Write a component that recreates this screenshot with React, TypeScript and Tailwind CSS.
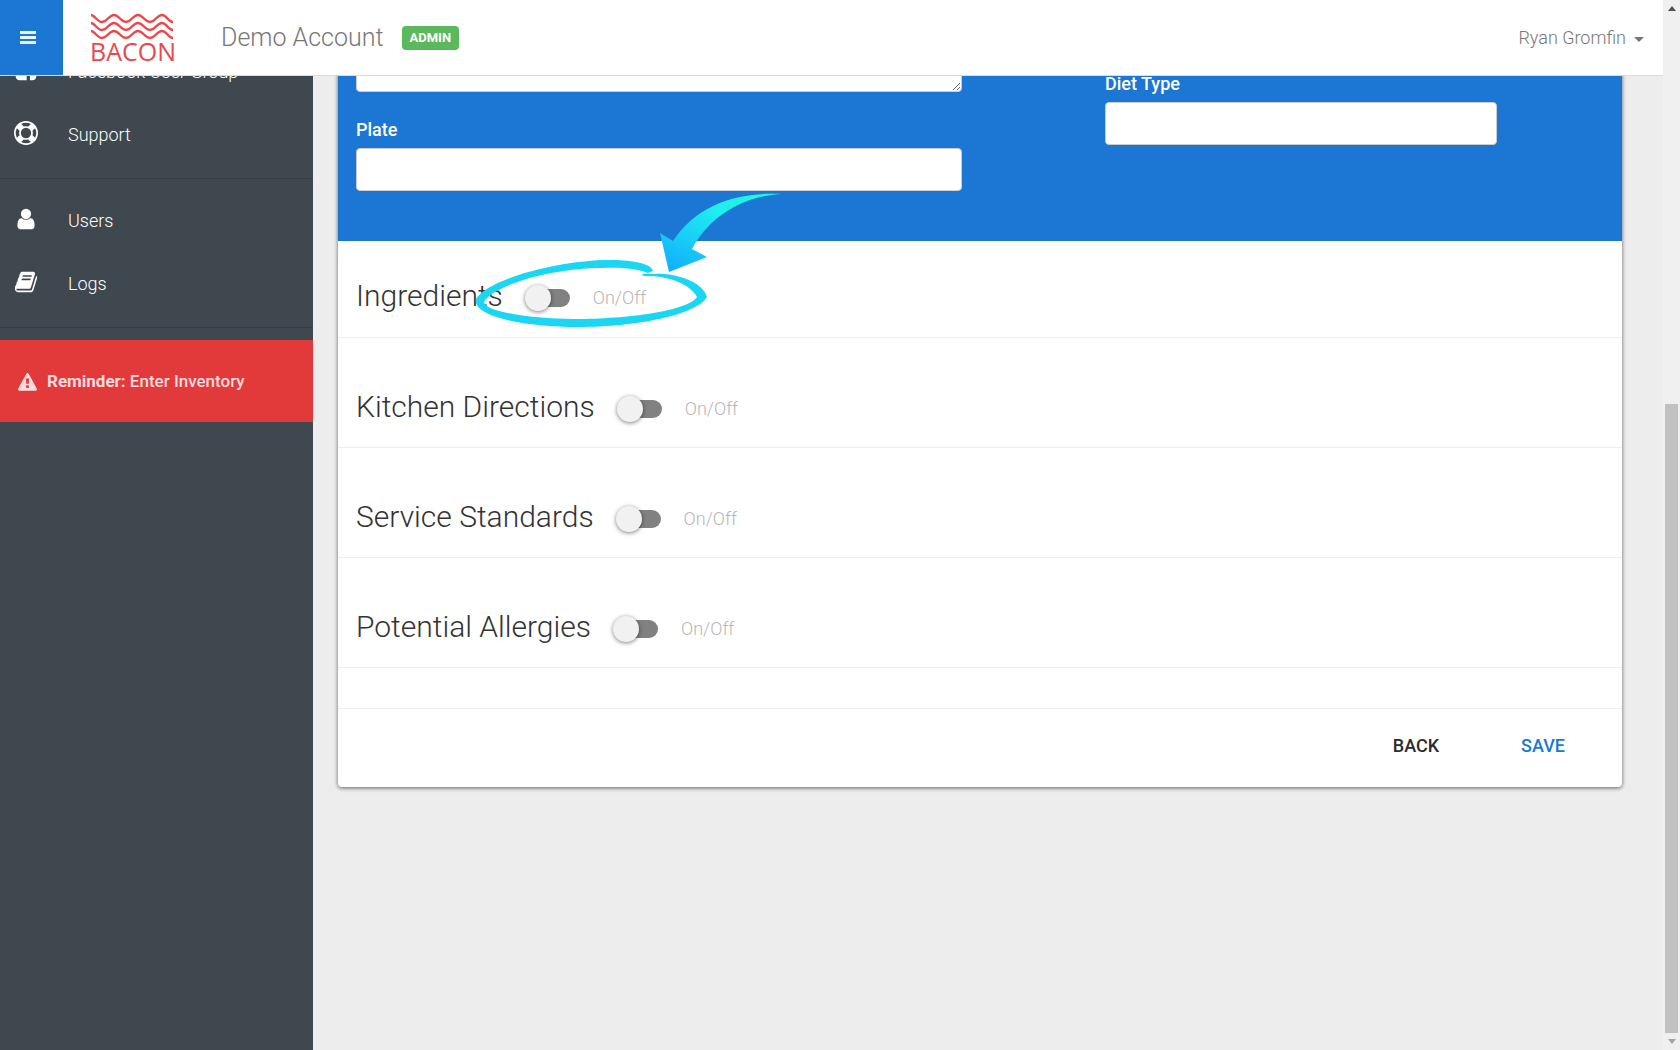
import type { ReactNode } from 'react'

function Icon({ d, className }: { d: string; className: string }) {
  return (
    <svg viewBox="0 0 1792 1792" fill="currentColor" aria-hidden="true" className={className}>
      <path d={d} />
    </svg>
  )
}

const icons = {
  facebook: 'M1376 128q119 0 203.5 84.5t84.5 203.5v960q0 119-84.5 203.5t-203.5 84.5h-188v-595h199l30-232h-229v-148q0-56 23.5-84t91.5-28l122-1v-207q-63-9-178-9-136 0-217.5 80t-81.5 226v171h-200v232h200v595h-532q-119 0-203.5-84.5t-84.5-203.5v-960q0-119 84.5-203.5t203.5-84.5h960z',
  support: 'M896 0q182 0 348 71t286 191 191 286 71 348-71 348-191 286-286 191-348 71-348-71-286-191-191-286-71-348 71-348 191-286 286-191 348-71zm0 128q-190 0-361 90l194 194q82-28 167-28t167 28l194-194q-171-90-361-90zm-678 1129l194-194q-28-82-28-167t28-167l-194-194q-90 171-90 361t90 361zm678 407q190 0 361-90l-194-194q-82 28-167 28t-167-28l-194 194q171 90 361 90zm0-384q159 0 271.5-112.5t112.5-271.5-112.5-271.5-271.5-112.5-271.5 112.5-112.5 271.5 112.5 271.5 271.5 112.5zm484-217l194 194q90-171 90-361t-90-361l-194 194q28 82 28 167t-28 167z',
  user: 'M1536 1399q0 109-62.5 187t-150.5 78h-854q-88 0-150.5-78t-62.5-187q0-85 8.5-160.5t31.5-152 58.5-131 94-89 134.5-34.5q131 128 313 128t313-128q76 0 134.5 34.5t94 89 58.5 131 31.5 152 8.5 160.5zm-256-887q0 159-112.5 271.5t-271.5 112.5-271.5-112.5-112.5-271.5 112.5-271.5 271.5-112.5 271.5 112.5 112.5 271.5z',
  book: 'M1703 478q40 57 18 129l-275 906q-19 64-76.5 107.5t-122.5 43.5h-923q-77 0-148.5-53.5t-99.5-131.5q-24-67-2-127 0-4 3-27t4-37q1-8-3-21.5t-3-19.5q2-11 8-21t16.5-23.5 16.5-23.5q23-38 45-91.5t30-91.5q3-10 .5-30t-.5-28q3-11 17-28t17-23q21-36 42-92t25-90q1-9-2.5-32t.5-28q4-13 22-30.5t22-22.5q19-26 42.5-84.5t27.5-96.5q1-8-3-25.5t-2-26.5q2-8 9-18t18-23 17-21q8-12 16.5-30.5t15-35 16-36 19.5-32 26.5-23.5 36-11.5 47.5 5.5l-1 3q38-9 51-9h761q74 0 114 56t18 130l-274 906q-36 119-71.5 153.5t-128.5 34.5h-869q-27 0-38 15-11 16-1 43 24 70 144 70h923q29 0 56-15.5t35-41.5l300-987q7-22 5-57 38 15 59 43zm-1064 2q-4 13 2 22.5t20 9.5h608q13 0 25.5-9.5t16.5-22.5l21-64q4-13-2-22.5t-20-9.5h-608q-13 0-25.5 9.5t-16.5 22.5zm-83 256q-4 13 2 22.5t20 9.5h608q13 0 25.5-9.5t16.5-22.5l21-64q4-13-2-22.5t-20-9.5h-608q-13 0-25.5 9.5t-16.5 22.5z',
  warning: 'M1024 1375v-190q0-14-9.5-23.5t-22.5-9.5h-192q-13 0-22.5 9.5t-9.5 23.5v190q0 14 9.5 23.5t22.5 9.5h192q13 0 22.5-9.5t9.5-23.5zm-2-374l18-459q0-12-10-19-13-11-24-11h-220q-11 0-24 11-10 7-10 21l17 457q0 10 10 16.5t24 6.5h185q14 0 23.5-6.5t10.5-16.5zm-14-934l768 1408q35 63-2 126-17 29-46.5 46t-63.5 17h-1536q-34 0-63.5-17t-46.5-46q-37-63-2-126l768-1408q17-31 47-49t65-18 65 18 47 49z',
}

function Logo() {
  const wave = 'c4 0 6 7 11 7s7 -7 12 -7s7 7 12 7s7 -7 12 -7s7 7 12 7s7 -7 12 -7s6 7 11 7'
  return (
    <a href="#" className="flex flex-col w-[84px] ml-[27px] pb-[3px] text-[#e9494b]">
      <svg viewBox="0 0 84 29" fill="none" stroke="currentColor" strokeWidth="2.3" className="w-[84px] h-[29px]" aria-hidden="true">
        <path d={'M1 3' + wave} />
        <path d={'M1 11' + wave} />
        <path d={'M1 19' + wave} />
      </svg>
      <span className="font-['Open_Sans'] text-[25px] leading-5">BACON</span>
    </a>
  )
}

function NavItem({ icon, children }: { icon: string; children: ReactNode }) {
  return (
    <li>
      <a href="#" className="flex items-center h-[63px] pl-[14px] text-lg font-light text-white">
        <Icon d={icon} className="size-6 mr-[30px] mb-1" />
        {children}
      </a>
    </li>
  )
}

function Sidebar() {
  return (
    <nav className="w-[313px] shrink-0 bg-[#3f474f] -mt-9">
      <ul>
        <NavItem icon={icons.facebook}>Facebook User Group</NavItem>
        <NavItem icon={icons.support}>Support</NavItem>
      </ul>
      <ul className="mt-3 pt-[10px] pb-3 border-y border-[#373e45]">
        <NavItem icon={icons.user}>Users</NavItem>
        <NavItem icon={icons.book}>Logs</NavItem>
      </ul>
      <a href="#" className="flex items-center h-[82px] mt-3 pt-[2px] pl-[18px] bg-[#e23a3b] text-[17px] font-medium text-[#fbdcdc]">
        <Icon d={icons.warning} className="size-[19px] mr-[10px]" />
        <span><b>Reminder:</b> Enter Inventory</span>
      </a>
    </nav>
  )
}

function ToggleSection({ title, first, children }: { title: string; first?: boolean; children?: ReactNode }) {
  return (
    <section className={first ? 'relative pt-[34px] pb-5 px-[18px] border-b border-[#eeeeee]' : 'pt-12 pb-[19px] px-[18px] border-b border-[#eeeeee]'}>
      <label className="flex items-center w-fit">
        <h2 className="text-[30px] leading-[42px] font-light text-[#333333]">{title}</h2>
        <input
          type="checkbox"
          className="appearance-none relative w-11 h-[18px] mt-1 ml-[23px] rounded-full bg-[#818181] before:absolute before:-left-px before:-top-1 before:size-[26px] before:rounded-full before:bg-[#f1f1f1] before:shadow-[0_1px_4px_rgba(0,0,0,0.5)]"
        />
        <span className="mt-1 ml-[23px] text-lg font-light text-[#b5b5b5]">On/Off</span>
      </label>
      {children}
    </section>
  )
}

function Callout() {
  return (
    <svg viewBox="0 0 320 140" className="absolute left-[132px] -top-[51px] w-80 h-[140px] pointer-events-none" aria-hidden="true">
      <defs>
        <linearGradient id="arrow" x1="0.8" y1="0" x2="0.1" y2="1">
          <stop offset="0" stopColor="#22f5e0" />
          <stop offset="0.3" stopColor="#1eeef0" />
          <stop offset="1" stopColor="#12aefd" />
        </linearGradient>
      </defs>
      <path fill="url(#arrow)" d="M312 4C270 2 228 13 203 51L190 43L199 82L237 67L222 59C236 32 267 6 312 4Z" />
      <path
        fill="#1ad6f3"
        d="M183 81C182 74 163 70 143 70C95 69 18 88 6 109C2 127 56 137 107 137C170 137 227 124 237 107C233 92 205 82 183 84Q178 84 172 84Q172 86 176 86C199 86 220 94 227 107C218 121 157 129 105 129C58 129 14 121 14 112C22 96 80 78 133 78C157 77 170 80 178 83Z"
      />
    </svg>
  )
}

function RecipeCard() {
  const field = 'block w-full h-[43px] px-3 rounded border border-[#cccccc] bg-white'
  return (
    <form className="rounded-b bg-white shadow-[0_1px_4px_rgba(0,0,0,0.6)]">
      <div className="grid grid-cols-12 h-[201px] -mt-9 bg-[#1b76d4] text-lg leading-6 text-white">
        <div className="col-span-6 px-[18px]">
          <textarea aria-label="Description" className="block w-full h-[52px] px-3 rounded border border-[#cccccc] bg-white resize-y" />
          <label htmlFor="plate" className="block mt-[26px] mb-[6px] font-medium">Plate</label>
          <input id="plate" type="text" className={field} />
        </div>
        <div className="col-span-4 col-start-8 px-[18px] pt-8">
          <label htmlFor="diet" className="block mb-[6px] font-medium">Diet Type</label>
          <input id="diet" type="text" className={field} />
        </div>
      </div>
      <ToggleSection title="Ingredients" first>
        <Callout />
      </ToggleSection>
      <ToggleSection title="Kitchen Directions" />
      <ToggleSection title="Service Standards" />
      <ToggleSection title="Potential Allergies" />
      <div className="flex justify-end gap-[82px] mt-10 pt-6 pb-7 pr-[57px] border-t border-[#eeeeee] text-lg leading-[26px] font-medium">
        <button type="button" className="text-[#2b2b2b]">BACK</button>
        <button type="submit" className="text-[#1b76d4]">SAVE</button>
      </div>
    </form>
  )
}

function ScrollRail() {
  return (
    <div className="flex flex-col items-center w-[17px] shrink-0 py-[6px] bg-[#f0f0f0]">
      <svg viewBox="0 0 8 5" className="w-2 h-[5px]" fill="#505050" aria-hidden="true"><path d="M4 0L8 5H0Z" /></svg>
      <div className="flex-[393]" />
      <div className="flex-[629] w-[13px] mb-[6px] bg-[#c1c1c1]" />
      <svg viewBox="0 0 8 5" className="w-2 h-[5px]" fill="#a3a3a3" aria-hidden="true"><path d="M0 0H8L4 5Z" /></svg>
    </div>
  )
}

export default function App() {
  return (
    <div className="flex h-screen overflow-hidden bg-[#ededed] font-[Roboto,sans-serif]">
      <div className="flex flex-col flex-1 min-w-0">
        <header className="relative z-10 flex items-center h-[76px] shrink-0 border-b border-[#dcdcdc] bg-white">
          <button type="button" aria-label="Menu" className="self-stretch w-[63px] pl-5 bg-[#1b76d4]">
            <svg viewBox="0 0 16 13" fill="#e8f2fc" className="w-4 h-[13px]" aria-hidden="true">
              <path d="M0 0H16V3H0ZM0 5H16V8H0ZM0 10H16V13H0Z" />
            </svg>
          </button>
          <Logo />
          <h1 className="ml-[47px] text-[25px] font-light text-[#777777]">Demo Account</h1>
          <span className="ml-[18px] px-2 rounded bg-[#5cb85c] text-[13px] leading-6 font-bold text-white">ADMIN</span>
          <button type="button" className="flex items-center gap-2 ml-auto mr-[19px] text-lg font-light text-[#777777]">
            Ryan Gromfin
            <svg viewBox="0 0 10 5" className="w-[10px] h-[5px] mt-1" fill="currentColor" aria-hidden="true"><path d="M0 0H10L5 5Z" /></svg>
          </button>
        </header>
        <div className="flex flex-1 min-h-0">
          <Sidebar />
          <main className="flex-1 min-w-0 pl-[25px] pr-[41px]">
            <RecipeCard />
          </main>
        </div>
      </div>
      <ScrollRail />
    </div>
  )
}
